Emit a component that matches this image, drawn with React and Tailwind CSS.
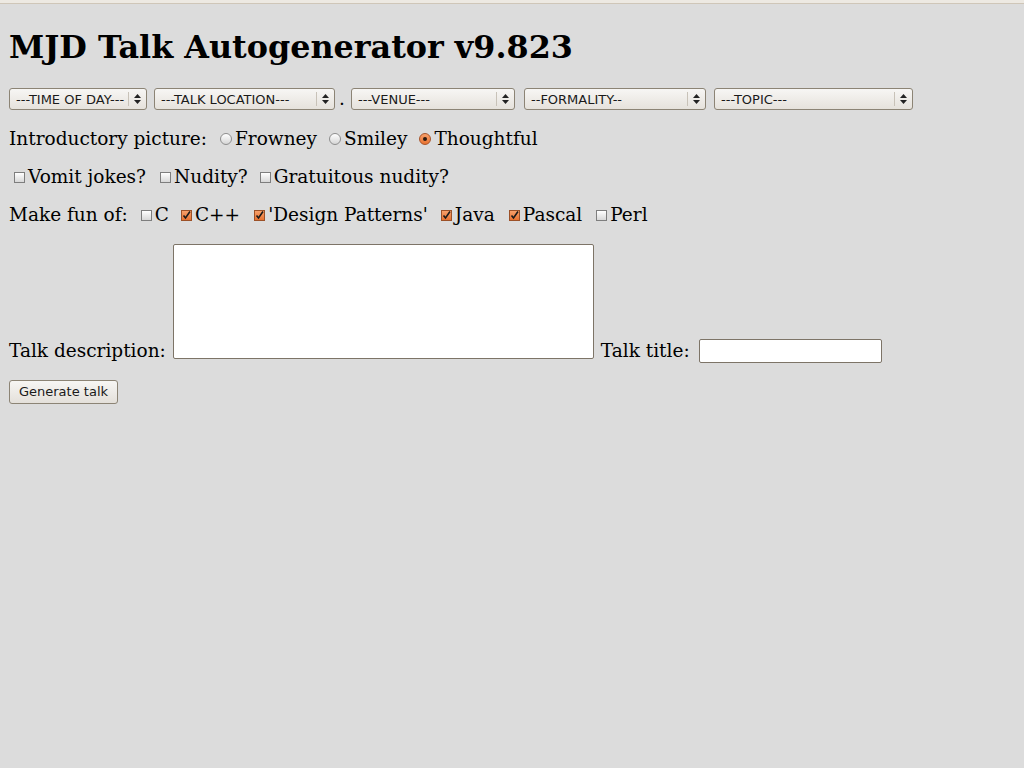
import React from 'react';

const serif = { fontFamily: '"DejaVu Serif", "Liberation Serif", serif' };

const Select = ({ label, width }) => (
  <div
    className={`flex h-[22px] items-stretch rounded-[3px] border border-[#8c8475] bg-gradient-to-b from-[#f7f6f4] to-[#e6e2dc] text-[13px] text-[#1a1a1a] ${width}`}
    style={{ fontFamily: '"DejaVu Sans", sans-serif' }}
  >
    <div className="flex flex-1 items-center pl-[6px] leading-none">{label}</div>
    <div className="my-[3px] w-px bg-[#c8c2b8]" />
    <div className="flex w-[17px] flex-col items-center justify-center gap-[2px]">
      <svg width="7" height="4" viewBox="0 0 7 4"><path d="M0 4 L3.5 0 L7 4 Z" fill="#222" /></svg>
      <svg width="7" height="4" viewBox="0 0 7 4"><path d="M0 0 L3.5 4 L7 0 Z" fill="#222" /></svg>
    </div>
  </div>
);

const Radio = ({ checked }) => (
  <span
    className={`flex h-[12px] w-[12px] shrink-0 items-center justify-center rounded-full border ${
      checked
        ? 'border-[#a8542a] bg-gradient-to-b from-[#f7a06a] to-[#e8722f]'
        : 'border-[#8e8e8e] bg-gradient-to-b from-[#ffffff] to-[#d6d6d6]'
    }`}
  >
    {checked && <span className="h-[4px] w-[4px] rounded-full bg-[#2a1a10]" />}
  </span>
);

const Check = ({ checked }) => (
  <span
    className={`flex h-[11px] w-[11px] shrink-0 items-center justify-center border ${
      checked
        ? 'border-[#9c5128] bg-gradient-to-b from-[#f7a06a] to-[#e8722f]'
        : 'border-[#7e7e7e] bg-gradient-to-b from-[#ffffff] to-[#d8d8d8]'
    }`}
  >
    {checked && (
      <svg width="9" height="9" viewBox="0 0 9 9">
        <path d="M1.5 4.5 L3.5 7 L8 0.5" stroke="#1a1a1a" strokeWidth="1.6" fill="none" />
      </svg>
    )}
  </span>
);

const Option = ({ children, box, className = '' }) => (
  <span className={`flex items-center gap-[3px] ${className}`}>
    {box}
    <span>{children}</span>
  </span>
);

export default function App() {
  return (
    <div className="min-h-[768px] w-full bg-[#dcdcdc] text-black" style={serif}>
      <div className="h-[3px] bg-[#ede9e2]" />
      <div className="h-px bg-[#cfc6b8]" />

      <div className="px-[9px]">
        <h1 className="mt-[24px] text-[31.8px] font-bold leading-[37px]">MJD Talk Autogenerator v9.823</h1>

        <div className="mt-[23px] flex h-[22px] items-center">
          <Select label="---TIME OF DAY---" width="w-[138px]" />
          <Select label="---TALK LOCATION---" width="ml-[7px] w-[181px]" />
          <span className="ml-[4px] w-[12px] text-[18.5px] leading-none">.</span>
          <Select label="---VENUE---" width="w-[164px]" />
          <Select label="--FORMALITY--" width="ml-[9px] w-[182px]" />
          <Select label="---TOPIC---" width="ml-[8px] w-[199px]" />
        </div>

        <div className="mt-[18px] flex h-[22px] items-center text-[18.5px]">
          <span>Introductory picture:</span>
          <Option box={<Radio />} className="ml-[13px]">Frowney</Option>
          <Option box={<Radio />} className="ml-[12px]">Smiley</Option>
          <Option box={<Radio checked />} className="ml-[12px]">Thoughtful</Option>
        </div>

        <div className="mt-[16px] flex h-[22px] items-center text-[18.5px]">
          <Option box={<Check />} className="ml-[5px]">Vomit jokes?</Option>
          <Option box={<Check />} className="ml-[14px]">Nudity?</Option>
          <Option box={<Check />} className="ml-[12px]">Gratuitous nudity?</Option>
        </div>

        <div className="mt-[16px] flex h-[22px] items-center text-[18.5px]">
          <span>Make fun of:</span>
          <Option box={<Check />} className="ml-[13px]">C</Option>
          <Option box={<Check checked />} className="ml-[12px]">C++</Option>
          <Option box={<Check checked />} className="ml-[14px]">'Design Patterns'</Option>
          <Option box={<Check checked />} className="ml-[13px]">Java</Option>
          <Option box={<Check checked />} className="ml-[14px]">Pascal</Option>
          <Option box={<Check />} className="ml-[14px]">Perl</Option>
        </div>

        <div className="mt-[18px] flex items-end text-[18.5px]">
          <span className="mb-[-1px] leading-none">Talk description:</span>
          <div className="ml-[7px] h-[115px] w-[421px] rounded-[2px] border border-[#7d7467] bg-white" />
          <span className="mb-[-1px] ml-[7px] leading-none">Talk title:</span>
          <div className="mb-[-4px] ml-[9px] h-[24px] w-[183px] rounded-[2px] border border-[#7d7467] bg-white" />
        </div>

        <button
          className="mt-[21px] flex h-[24px] w-[109px] items-center justify-center rounded-[3px] border border-[#8c8475] bg-gradient-to-b from-[#f7f6f4] to-[#e4e0da] text-[13px] text-[#1a1a1a]"
          style={{ fontFamily: '"DejaVu Sans", sans-serif' }}
        >
          Generate talk
        </button>
      </div>
    </div>
  );
}
